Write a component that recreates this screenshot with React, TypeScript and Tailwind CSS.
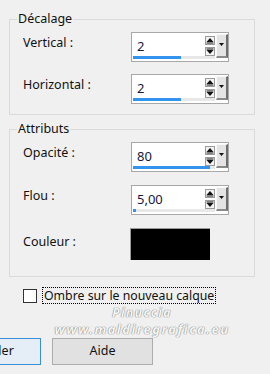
import type { ReactNode } from 'react';

const font = { fontFamily: '"Noto Sans", "Open Sans", sans-serif' };

function SpinArrows() {
  return (
    <div className="flex w-[10px] flex-col gap-[2px] pt-[3px]">
      <div className="flex h-[9px] items-center justify-center border border-[#9a9a9a] bg-[#f4f4f4]">
        <svg width="8" height="7" viewBox="0 0 8 7">
          <path d="M4 1 L7.5 5 L0.5 5 Z" fill="#111" />
          <rect x="0.5" y="5.5" width="7" height="1" fill="#111" />
        </svg>
      </div>
      <div className="flex h-[9px] items-center justify-center border border-[#9a9a9a] bg-[#f4f4f4]">
        <svg width="8" height="7" viewBox="0 0 8 7">
          <rect x="0.5" y="0.5" width="7" height="1" fill="#111" />
          <path d="M0.5 2 L7.5 2 L4 6 Z" fill="#111" />
        </svg>
      </div>
    </div>
  );
}

function Spin({ value, bar }: { value: string; bar: number }) {
  return (
    <div className="flex h-[30px] w-[98px] border border-[#a8a8a8] bg-white">
      <div className="flex flex-1 flex-col pl-[1px]">
        <div className="flex flex-1">
          <span className="flex-1 pl-[4px] pt-[5px] text-[13px] leading-[16px] text-[#14183a]">{value}</span>
          <SpinArrows />
        </div>
        <div className="mb-[2px] h-[3px] bg-[#e8e8e8]">
          <div className="h-full bg-[#3393ee]" style={{ width: `${bar}px` }} />
        </div>
      </div>
      <div className="ml-[1px] mt-[1px] mb-[3px] flex w-[12px] justify-center border-l border-t border-l-[#f8f8f8] border-t-[#f8f8f8] border-r-2 border-b-2 border-r-[#6e6e6e] border-b-[#8a8a8a] bg-[#e4e4e4] pt-[8px]">
        <svg width="5" height="3" viewBox="0 0 5 3">
          <path d="M0 0 L5 0 L2.5 3 Z" fill="#111" />
        </svg>
      </div>
    </div>
  );
}

function Row({ label, children, top = 'mt-[3px]' }: { label: string; children: ReactNode; top?: string }) {
  return (
    <div className="grid grid-cols-[108px_98px] items-start">
      <span className={`${top} text-[12.5px] leading-[16px] text-[#111]`}>{label}</span>
      {children}
    </div>
  );
}

function Group({ title, children, className }: { title: string; children: ReactNode; className: string }) {
  return (
    <fieldset className={`${className} ml-[9px] w-[246px] border border-[#dadada] p-0`}>
      <legend className="ml-[7px] px-[1px] text-[12.5px] leading-[16px] text-[#111]">{title}</legend>
      {children}
    </fieldset>
  );
}

export default function App() {
  return (
    <div className="h-[374px] w-[270px] overflow-hidden bg-[#f0f0f0]" style={font}>
      <Group title="Décalage" className="mt-[11px]">
        <div className="flex flex-col gap-[12px] pb-[10px] pl-[13px] pt-[5px]">
          <Row label="Vertical :">
            <Spin value="2" bar={48} />
          </Row>
          <Row label="Horizontal :">
            <Spin value="2" bar={48} />
          </Row>
        </div>
      </Group>

      <Group title="Attributs" className="mt-[6px]">
        <div className="flex flex-col gap-[13px] pb-[16px] pl-[13px] pt-[5px]">
          <Row label="Opacité :">
            <Spin value="80" bar={77} />
          </Row>
          <Row label="Flou :">
            <Spin value="5,00" bar={3} />
          </Row>
          <Row label="Couleur :" top="mt-[6px]">
            <div className="-ml-[1px] h-[32px] w-[80px] border-l border-t border-[#9c9c9c] bg-black" />
          </Row>
        </div>
      </Group>

      <div className="ml-[23px] mt-[10px] flex items-center gap-[5px]">
        <div className="h-[14px] w-[14px] border border-[#333] bg-white" />
        <span className="border border-dotted border-black px-[1px] text-[12.3px] leading-[15px] text-[#111]">
          Ombre sur le nouveau calque
        </span>
      </div>

      <div className="flex flex-col items-center pl-[14px] text-[#f6f6f6] [text-shadow:0_0_1px_#777,0_0_1px_#777]">
        <span className="text-[12px] font-bold italic leading-[17px] tracking-[1.5px]">Pinuccia</span>
        <span className="text-[13px] font-bold italic leading-[17px] tracking-[1.5px]">www.maldiregrafica.eu</span>
      </div>

      <div className="flex gap-[11px]">
        <button className="-ml-[60px] h-[27px] w-[101px] border border-[#3b8fd8] bg-[#e5eef7] text-[12.5px] text-[#111]">
          Annuler
        </button>
        <button className="h-[27px] w-[101px] border border-[#adadad] bg-[#e1e1e1] text-[12.5px] text-[#111]">
          Aide
        </button>
      </div>
    </div>
  );
}
